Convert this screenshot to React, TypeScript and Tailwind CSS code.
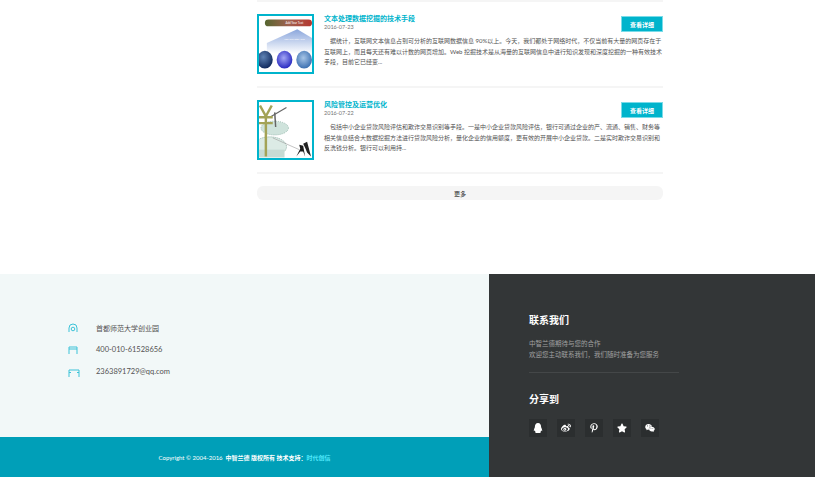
import { FaQq, FaWeibo, FaPinterestP, FaStar, FaWeixin } from "react-icons/fa";

const cjk = { fontFamily: '"Lato", "Noto Sans CJK SC", sans-serif' };

const articles = [
  {
    title: "文本处理数据挖掘的技术手段",
    date: "2016-07-23",
    body: "据统计，互联网文本信息占到可分析的互联网数据信息 90%以上。今天，我们都处于网络时代，不仅当前有大量的网页存在于互联网上，而且每天还有难以计数的网页增加。Web 挖掘技术是从海量的互联网信息中进行知识发现和深度挖掘的一种有效技术手段，目前它已经变...",
    thumb: "chart",
  },
  {
    title: "风险管控及运营优化",
    date: "2016-07-22",
    body: "包括中小企业贷款风险评估和欺诈交易识别等手段。一是中小企业贷款风险评估，银行可通过企业的产、流通、销售、财务等相关信息结合大数据挖掘方法进行贷款风险分析，量化企业的信用额度，更有效的开展中小企业贷款。二是实时欺诈交易识别和反洗钱分析。银行可以利用持...",
    thumb: "gear",
  },
];

const ChartThumb = () => (
  <svg viewBox="0 0 54 56" className="w-full h-full bg-white">
    <defs>
      <linearGradient id="bar" x1="0" x2="1" y1="0" y2="0">
        <stop offset="0" stopColor="#55662f" />
        <stop offset="0.5" stopColor="#a0614f" />
        <stop offset="1" stopColor="#b5362f" />
      </linearGradient>
      <linearGradient id="arrow" x1="0" x2="0" y1="0" y2="1">
        <stop offset="0" stopColor="#8aa6dc" />
        <stop offset="1" stopColor="#ffffff" />
      </linearGradient>
      <radialGradient id="b1" cx="0.4" cy="0.35" r="0.7">
        <stop offset="0" stopColor="#5f83b4" />
        <stop offset="1" stopColor="#0b2358" />
      </radialGradient>
      <radialGradient id="b2" cx="0.45" cy="0.4" r="0.7">
        <stop offset="0" stopColor="#a3a6f5" />
        <stop offset="1" stopColor="#1414b8" />
      </radialGradient>
      <radialGradient id="b3" cx="0.45" cy="0.4" r="0.7">
        <stop offset="0" stopColor="#a7c5e6" />
        <stop offset="1" stopColor="#2a62a8" />
      </radialGradient>
    </defs>
    <rect x="6" y="3" width="48" height="7" rx="3.5" fill="url(#bar)" />
    <text x="36" y="7.5" fontSize="3" fill="#fff" textAnchor="middle">Add Your Text</text>
    <polygon points="8,27 39,13 54,22 54,38 8,38" fill="url(#arrow)" />
    <text x="36" y="24" fontSize="2.5" fill="#fff" textAnchor="middle">Add Your Title Here</text>
    <ellipse cx="6" cy="44" rx="8" ry="9" fill="url(#b1)" />
    <ellipse cx="26" cy="44" rx="8" ry="9" fill="url(#b2)" />
    <ellipse cx="46" cy="44" rx="8" ry="9" fill="url(#b3)" />
  </svg>
);

const GearThumb = () => (
  <svg viewBox="0 0 54 56" className="w-full h-full bg-white">
    <ellipse cx="16" cy="26" rx="14" ry="7" fill="#cfe3dc" stroke="#9dbdb3" strokeDasharray="1 1" />
    <ellipse cx="11" cy="45" rx="17" ry="10" fill="#dcebe5" stroke="#8fb0a5" strokeDasharray="1 1" />
    <rect x="0" y="48" width="26" height="8" fill="#c7dbd4" />
    <path d="M16 10 L17 25" stroke="#666" strokeWidth="1.5" />
    <path d="M11 15 L28 5" stroke="#666" strokeWidth="1.2" />
    <path d="M1 3 L7 14 L13 3 M7 14 V55 M0 15 H14 M0 21 H14" stroke="#a3a356" strokeWidth="2.5" fill="none" />
    <path d="M14 36 L41 48" stroke="#999" strokeWidth="0.6" />
    <path d="M38 55 L42 47 L41 43 L45 44 L47 55 L45 50 L42 50 Z" fill="#1b1b1b" />
    <path d="M45 42 L49 40 L53 55 L49 51 L47 46 Z" fill="#222" />
  </svg>
);

const Article = ({ item }: { item: (typeof articles)[number] }) => (
  <div className="flex gap-2.5 pt-3 h-[86px] border-b-2 border-neutral-100">
    <div className="w-[57px] h-[60px] shrink-0 border-2 border-[#00b4cc]">
      {item.thumb === "chart" ? <ChartThumb /> : <GearThumb />}
    </div>
    <div className="flex-1 min-w-0">
      <div className="flex justify-between items-start">
        <div>
          <h3 className="text-[7px] leading-2 font-bold text-[#00b4cc]">{item.title}</h3>
          <p className="mt-px text-[5.5px] leading-2 text-neutral-500">{item.date}</p>
        </div>
        <button className="w-[42px] h-4 mt-0.5 bg-[#00b4cc] text-white text-[6px] font-bold border border-[#7adbe8]">
          查看详细
        </button>
      </div>
      <p className="mt-1 text-[6px] leading-[10.5px] text-neutral-600 indent-1.5">{item.body}</p>
    </div>
  </div>
);

const shares = [FaQq, FaWeibo, FaPinterestP, FaStar, FaWeixin];

export default function App() {
  return (
    <div className="w-full h-[477px] overflow-hidden bg-white flex flex-col" style={cjk}>
      <main className="h-[274px] shrink-0 ml-[257px] w-[406px]">
        <div className="h-0.5 bg-neutral-100" />
        {articles.map((a) => (
          <Article key={a.date} item={a} />
        ))}
        <button className="mt-3 w-full h-3.5 rounded-md bg-neutral-100 text-[6px] text-neutral-800">更多</button>
      </main>

      <footer className="flex-1 flex min-h-0">
        <div className="w-[489px] shrink-0 flex flex-col bg-[#f2f8f8]">
          <ul className="flex-1 pl-[68px] pt-12 flex flex-col gap-2.5 text-[7px] text-neutral-600">
            <li className="flex items-center gap-4 h-3">
              <span className="w-3 shrink-0">
                <svg viewBox="0 0 10 10" className="w-2.5 h-2.5" fill="none" stroke="#3cc3d8">
                  <path d="M1 9 V5 a4 4 0 0 1 8 0 V9" />
                  <circle cx="5" cy="6" r="1.8" />
                </svg>
              </span>
              <span>首都师范大学创业园</span>
            </li>
            <li className="flex items-center gap-4 h-3">
              <span className="w-3 shrink-0">
                <svg viewBox="0 0 10 10" className="w-2.5 h-2.5" fill="none" stroke="#3cc3d8">
                  <path d="M1 9 V2 H9 V9 M1 4 H9" />
                </svg>
              </span>
              <span className="text-[7.5px]">400-010-61528656</span>
            </li>
            <li className="flex items-center gap-4 h-3">
              <span className="w-3 shrink-0">
                <svg viewBox="0 0 12 10" className="w-3 h-2.5" fill="none" stroke="#3cc3d8">
                  <path d="M1 10 V3 H11 V10 M1 5.5 H3 M9 5.5 H11" />
                </svg>
              </span>
              <span className="text-[7.5px]">2363891729@qq.com</span>
            </li>
          </ul>
          <div className="h-10 bg-[#009fb8] flex items-center justify-center text-[6px] font-bold text-white">
            <span className="font-normal">Copyright © 2004-2016</span>
            <span>&nbsp; 中智兰德 版权所有 技术支持：</span>
            <span className="text-cyan-300">时代创信</span>
          </div>
        </div>

        <div className="flex-1 bg-[#333637] pl-10 pt-9 min-w-0">
          <h2 className="text-[10px] leading-5 font-bold text-white">联系我们</h2>
          <p className="mt-2 text-[6.5px] leading-[11px] text-neutral-400">
            中智兰德期待与您的合作
            <br />
            欢迎您主动联系我们，我们随时准备为您服务
          </p>
          <div className="mt-3 w-[150px] border-t border-[#444748]" />
          <h2 className="mt-4 text-[10px] leading-5 font-bold text-white">分享到</h2>
          <div className="mt-2.5 flex gap-2.5">
            {shares.map((Icon, i) => (
              <div key={i} className="w-[18px] h-[18px] bg-[#2b2e2f] flex items-center justify-center text-white">
                <Icon className="w-2.5 h-2.5" />
              </div>
            ))}
          </div>
        </div>
      </footer>
    </div>
  );
}
